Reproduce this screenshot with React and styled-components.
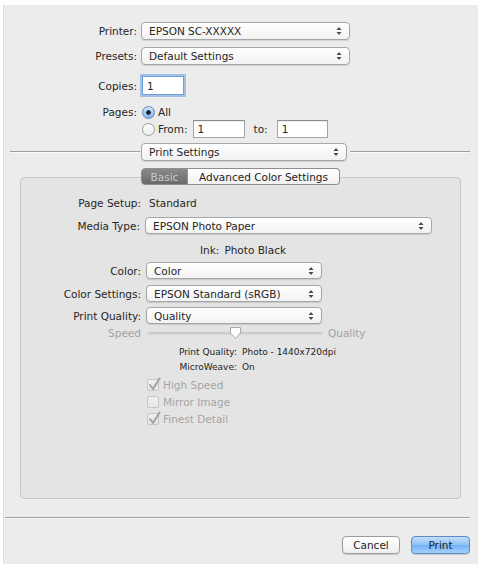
import React from 'react'
import styled, { createGlobalStyle } from 'styled-components'

const GlobalStyle = createGlobalStyle`
  * { box-sizing: border-box; }
  body {
    margin: 0;
    background: #fff;
    font-family: "DejaVu Sans", "Liberation Sans", sans-serif;
  }
`

const Window = styled.div`
  margin: 5px 0 0 3px;
  width: 475px;
  height: 559px;
  background: #ececec;
  border-left: 1px solid #dddddd;
  display: flex;
  flex-direction: column;
  padding-top: 17px;
  font-size: 10.5px;
  color: #262626;
`

const Row = styled.div`
  display: flex;
  align-items: center;
  height: ${({ $h }) => $h || 18}px;
  margin-top: ${({ $mt }) => $mt || 0}px;
  margin-left: ${({ $ml }) => $ml || 0}px;
  white-space: nowrap;
`

const Label = styled.div`
  width: ${({ $w }) => $w || 137}px;
  flex-shrink: 0;
  text-align: right;
  padding-right: ${({ $pr }) => ($pr === undefined ? 4 : $pr)}px;
  color: ${({ $dim }) => ($dim ? '#a2a2a2' : '#262626')};
`

const PopupBox = styled.div`
  width: ${({ $w }) => $w}px;
  height: ${({ $h }) => $h || 18}px;
  border: 1px solid #a6a6a6;
  border-radius: 4px;
  background: linear-gradient(#ffffff, #f2f2f2);
  box-shadow: 0 1px 1px rgba(0, 0, 0, 0.12);
  display: flex;
  align-items: center;
  justify-content: space-between;
  padding: 0 7px 0 7px;
  flex-shrink: 0;
`

const Arrows = () => (
  <svg width="6" height="10" viewBox="0 0 6 10">
    <polygon points="0.5,4 3,1 5.5,4" fill="#4a4a4a" />
    <polygon points="0.5,6 3,9 5.5,6" fill="#4a4a4a" />
  </svg>
)

const Popup = ({ w, h, children }) => (
  <PopupBox $w={w} $h={h}>
    <span>{children}</span>
    <Arrows />
  </PopupBox>
)

const Field = styled.div`
  width: ${({ $w }) => $w}px;
  height: ${({ $h }) => $h || 18}px;
  margin-left: ${({ $ml }) => $ml || 0}px;
  background: #fff;
  border: 1px solid ${({ $focus }) => ($focus ? '#6d9fd8' : '#a3a3a3')};
  border-top-color: ${({ $focus }) => ($focus ? '#6d9fd8' : '#8c8c8c')};
  box-shadow: ${({ $focus }) =>
    $focus ? '0 0 0 2px rgba(125, 170, 228, 0.65)' : 'inset 0 1px 1px rgba(0,0,0,0.08)'};
  padding-left: 4px;
  display: flex;
  align-items: center;
`

const Radio = styled.div`
  width: 13px;
  height: 13px;
  border-radius: 50%;
  margin-left: 1px;
  border: 1px solid ${({ $on }) => ($on ? '#5f86b3' : '#9c9c9c')};
  background: ${({ $on }) =>
    $on
      ? 'radial-gradient(circle at 50% 50%, #18222e 0 2px, transparent 2.5px), linear-gradient(#d4e6f8, #7fb2e8)'
      : 'linear-gradient(#fdfdfd, #ececec)'};
  flex-shrink: 0;
  margin-right: 3px;
`

const Divider = styled.div`
  display: flex;
  align-items: center;
  margin-top: 5px;
  height: 18px;
`

const Etch = styled.div`
  height: 2px;
  border-top: 1px solid #9f9f9f;
  border-bottom: 1px solid #fafafa;
  width: ${({ $w }) => ($w ? `${$w}px` : 'auto')};
  flex: ${({ $w }) => ($w ? 'none' : 1)};
  margin: ${({ $m }) => $m || '0'};
`

const TabBar = styled.div`
  display: flex;
  margin: 7px 0 0 137px;
  height: 17px;
  position: relative;
  z-index: 1;
`

const Tab = styled.div`
  height: 17px;
  width: ${({ $w }) => $w}px;
  display: flex;
  align-items: center;
  justify-content: center;
  border: 1px solid #8e8e8e;
  border-left-width: ${({ $first }) => ($first ? 1 : 0)}px;
  border-radius: ${({ $first }) => ($first ? '4px 0 0 4px' : '0 4px 4px 0')};
  background: ${({ $on }) =>
    $on ? 'linear-gradient(#8a8a8a, #6a6a6a)' : 'linear-gradient(#ffffff, #f0f0f0)'};
  color: ${({ $on }) => ($on ? '#cdcdcd' : '#1e1e1e')};
`

const Panel = styled.div`
  margin: -8px 0 0 16px;
  width: 441px;
  height: 322px;
  background: #e4e4e4;
  border: 1px solid #c9c9c9;
  border-radius: 4px;
  padding-top: 17px;
  display: flex;
  flex-direction: column;
`

const Value = styled.span`
  padding-left: ${({ $pl }) => $pl || 0}px;
  color: ${({ $dim }) => ($dim ? '#a2a2a2' : 'inherit')};
`

const Track = styled.div`
  position: relative;
  width: 174px;
  height: 3px;
  margin-left: 2px;
  border-radius: 2px;
  background: linear-gradient(#c4c4c4, #dadada);
`

const Knob = styled.svg`
  position: absolute;
  left: 81px;
  top: -6px;
`

const InfoRow = styled.div`
  display: flex;
  align-items: center;
  height: 12px;
  margin-top: ${({ $mt }) => $mt}px;
  font-size: 9px;
  color: #1e1e1e;
  white-space: nowrap;
`

const InfoLabel = styled.div`
  width: 216px;
  text-align: right;
`

const CheckRow = styled.div`
  display: flex;
  align-items: center;
  height: 17px;
  margin-top: ${({ $mt }) => $mt || 0}px;
  margin-left: 126px;
  color: #a5a5a5;
`

const CheckBox = styled.div`
  position: relative;
  width: 12px;
  height: 12px;
  border: 1px solid #c6c6c6;
  border-radius: 2px;
  background: linear-gradient(#f0f0f0, #e6e6e6);
  margin-right: 4px;
  svg {
    position: absolute;
    left: 0;
    top: -3px;
  }
`

const Check = ({ on, children, mt }) => (
  <CheckRow $mt={mt}>
    <CheckBox>
      {on && (
        <svg width="13" height="14" viewBox="0 0 13 14">
          <path d="M2 8 L5 12 L11.5 1.5" fill="none" stroke="#a3a3a3" strokeWidth="2" strokeLinecap="round" strokeLinejoin="round" />
        </svg>
      )}
    </CheckBox>
    {children}
  </CheckRow>
)

const ButtonBar = styled.div`
  display: flex;
  justify-content: flex-end;
  gap: 11px;
  margin-top: 17px;
  padding-right: 8px;
`

const Button = styled.div`
  width: ${({ $w }) => $w}px;
  height: 18px;
  border-radius: 4px;
  border: 1px solid ${({ $primary }) => ($primary ? '#5c8cc4' : '#9d9d9d')};
  background: ${({ $primary }) =>
    $primary ? 'linear-gradient(#c3defa, #8cc1f6 50%, #6fb1f5 51%, #a6d2fb)' : 'linear-gradient(#ffffff, #efefef)'};
  box-shadow: 0 1px 1px rgba(0, 0, 0, 0.15);
  display: flex;
  align-items: center;
  justify-content: center;
  color: #1e1e1e;
`

export default function App() {
  return (
    <>
      <GlobalStyle />
      <Window>
        <Row>
          <Label>Printer:</Label>
          <Popup w={209}>EPSON SC-XXXXX</Popup>
        </Row>
        <Row $mt={7}>
          <Label>Presets:</Label>
          <Popup w={209}>Default Settings</Popup>
        </Row>
        <Row $mt={11} $h={19}>
          <Label>Copies:</Label>
          <Field $w={42} $h={19} $ml={1} $focus>1</Field>
        </Row>
        <Row $mt={9} $h={16}>
          <Label>Pages:</Label>
          <Radio $on />
          <span>All</span>
        </Row>
        <Row $mt={0} $h={18}>
          <Label />
          <Radio />
          <span>From:</span>
          <Field $w={52} $ml={5}>1</Field>
          <Value $pl={9}>to:</Value>
          <Field $w={51} $ml={9}>1</Field>
        </Row>
        <Divider>
          <Etch $w={130} $m="0 1px 0 6px" />
          <Popup w={206}>Print Settings</Popup>
          <Etch $m="0 8px 0 3px" />
        </Divider>

        <TabBar>
          <Tab $w={47} $on $first>Basic</Tab>
          <Tab $w={152}>Advanced Color Settings</Tab>
        </TabBar>
        <Panel>
          <Row $h={16}>
            <Label $w={125} $pr={5}>Page Setup:</Label>
            <Value $pl={3}>Standard</Value>
          </Row>
          <Row $mt={6} $h={17}>
            <Label $w={124} $pr={5}>Media Type:</Label>
            <Popup w={287} h={17}>EPSON Photo Paper</Popup>
          </Row>
          <Row $mt={8} $h={16} $ml={179}>
            <span>Ink:</span>
            <Value $pl={5}>Photo Black</Value>
          </Row>
          <Row $mt={4} $h={17}>
            <Label $w={125} $pr={5}>Color:</Label>
            <Popup w={176} h={17}>Color</Popup>
          </Row>
          <Row $mt={6} $h={17}>
            <Label $w={125} $pr={5}>Color Settings:</Label>
            <Popup w={176} h={17}>EPSON Standard (sRGB)</Popup>
          </Row>
          <Row $mt={5} $h={17}>
            <Label $w={125} $pr={5}>Print Quality:</Label>
            <Popup w={176} h={17}>Quality</Popup>
          </Row>
          <Row $mt={1} $h={16}>
            <Label $w={125} $pr={5} $dim>Speed</Label>
            <Track>
              <Knob width="13" height="14" viewBox="0 0 13 14">
                <path d="M1.5 1.5 H11.5 V7 L6.5 12.5 L1.5 7 Z" fill="#fdfdfd" stroke="#a9a9a9" strokeWidth="1" />
              </Knob>
            </Track>
            <Value $pl={6} $dim>Quality</Value>
          </Row>
          <InfoRow $mt={5}>
            <InfoLabel>Print Quality:</InfoLabel>
            <Value $pl={5}>Photo - 1440x720dpi</Value>
          </InfoRow>
          <InfoRow $mt={3}>
            <InfoLabel>MicroWeave:</InfoLabel>
            <Value $pl={5}>On</Value>
          </InfoRow>
          <Check on mt={3}>High Speed</Check>
          <Check>Mirror Image</Check>
          <Check on>Finest Detail</Check>
        </Panel>

        <Etch $m="18px 8px 0 1px" style={{ flex: 'none' }} />
        <ButtonBar>
          <Button $w={58}>Cancel</Button>
          <Button $w={59} $primary>Print</Button>
        </ButtonBar>
      </Window>
    </>
  )
}
